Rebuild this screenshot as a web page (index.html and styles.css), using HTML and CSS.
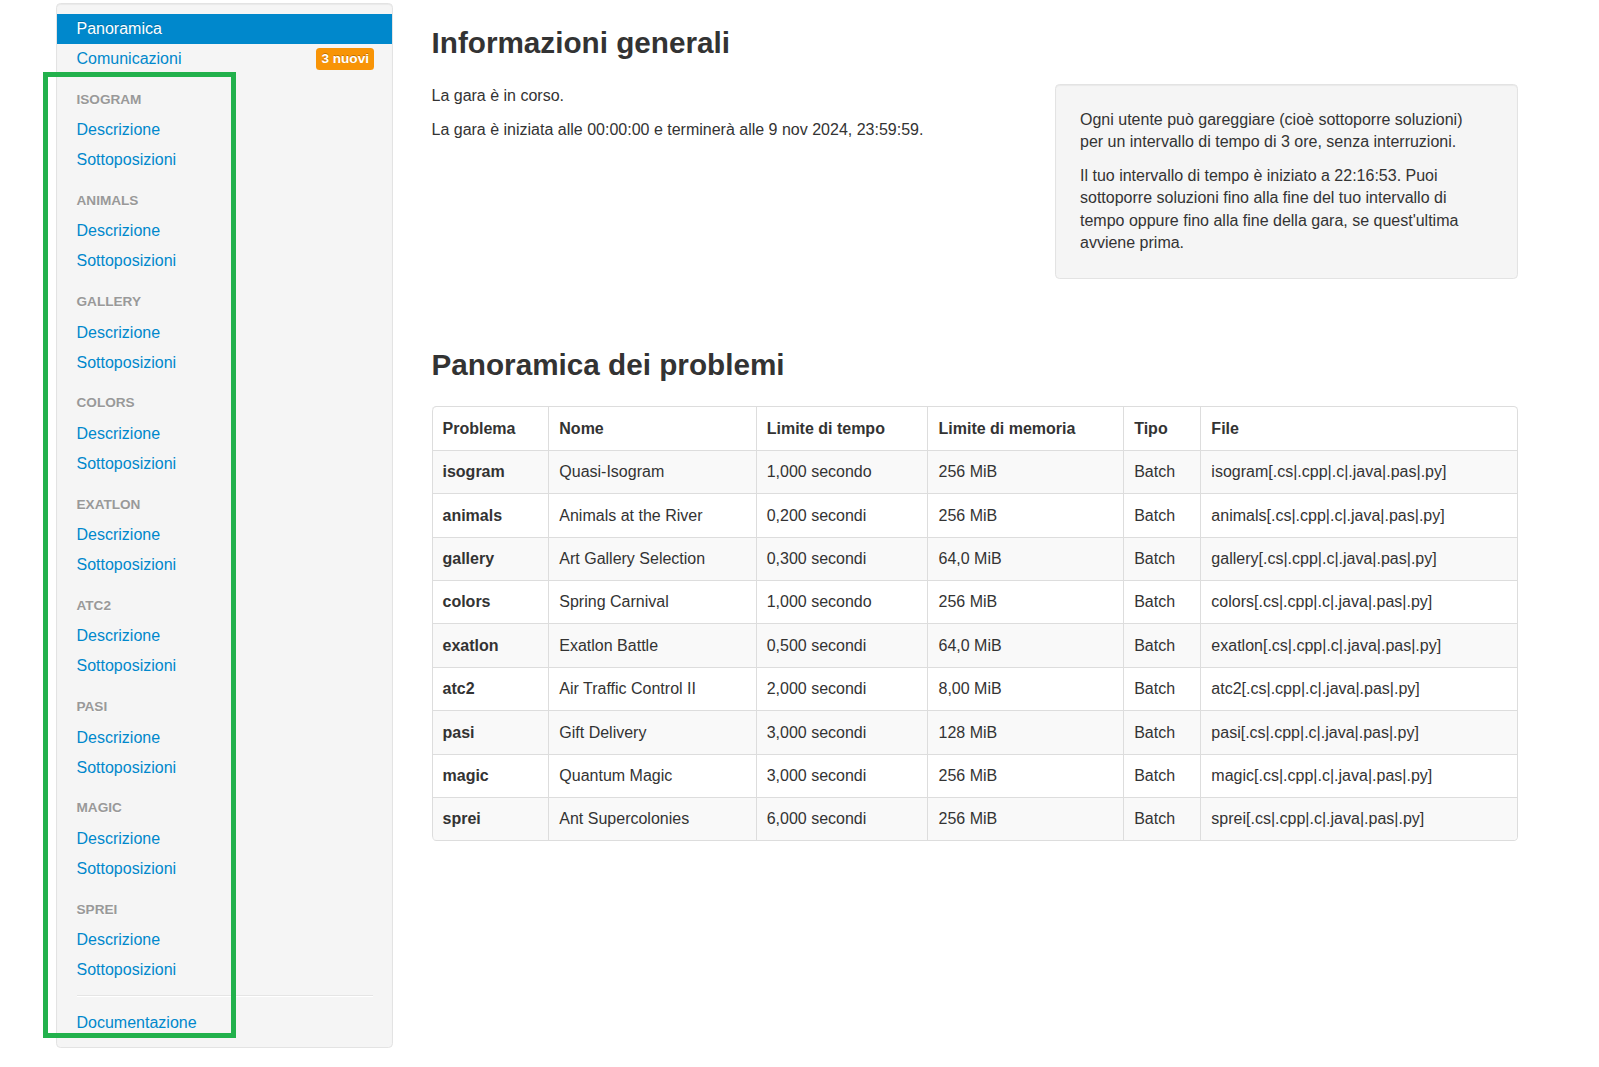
FILE: index.html
```html
<!DOCTYPE html>
<html lang="it">
<head>
<meta charset="utf-8">
<title>Panoramica</title>
<link rel="stylesheet" href="styles.css">
</head>
<body>
<div class="page">
  <div class="well sidebar">
    <ul class="nav-list">
      <li class="active"><a href="#">Panoramica</a></li>
      <li><a href="#" class="with-label">Comunicazioni <span class="label">3 nuovi</span></a></li>
      <li class="nav-header first">isogram</li>
      <li><a href="#">Descrizione</a></li>
      <li><a href="#">Sottoposizioni</a></li>
      <li class="nav-header">animals</li>
      <li><a href="#">Descrizione</a></li>
      <li><a href="#">Sottoposizioni</a></li>
      <li class="nav-header">gallery</li>
      <li><a href="#">Descrizione</a></li>
      <li><a href="#">Sottoposizioni</a></li>
      <li class="nav-header">colors</li>
      <li><a href="#">Descrizione</a></li>
      <li><a href="#">Sottoposizioni</a></li>
      <li class="nav-header">exatlon</li>
      <li><a href="#">Descrizione</a></li>
      <li><a href="#">Sottoposizioni</a></li>
      <li class="nav-header">atc2</li>
      <li><a href="#">Descrizione</a></li>
      <li><a href="#">Sottoposizioni</a></li>
      <li class="nav-header">pasi</li>
      <li><a href="#">Descrizione</a></li>
      <li><a href="#">Sottoposizioni</a></li>
      <li class="nav-header">magic</li>
      <li><a href="#">Descrizione</a></li>
      <li><a href="#">Sottoposizioni</a></li>
      <li class="nav-header">sprei</li>
      <li><a href="#">Descrizione</a></li>
      <li><a href="#">Sottoposizioni</a></li>
      <li class="divider"></li>
      <li><a href="#">Documentazione</a></li>
    </ul>
  </div>

  <div class="main">
    <h1>Informazioni generali</h1>
    <div class="info-row">
      <div class="info-text">
        <p>La gara è in corso.</p>
        <p>La gara è iniziata alle 00:00:00 e terminerà alle 9 nov 2024, 23:59:59.</p>
      </div>
      <div class="well info-box">
        <p>Ogni utente può gareggiare (cioè sottoporre soluzioni) per un intervallo di tempo di 3 ore, senza interruzioni.</p>
        <p>Il tuo intervallo di tempo è iniziato a 22:16:53. Puoi sottoporre soluzioni fino alla fine del tuo intervallo di tempo oppure fino alla fine della gara, se quest'ultima avviene prima.</p>
      </div>
    </div>

    <h1 class="problems-title">Panoramica dei problemi</h1>
    <table class="table">
      <thead>
        <tr>
          <th class="c-prob">Problema</th>
          <th class="c-name">Nome</th>
          <th class="c-time">Limite di tempo</th>
          <th class="c-mem">Limite di memoria</th>
          <th class="c-type">Tipo</th>
          <th>File</th>
        </tr>
      </thead>
      <tbody>
        <tr><th>isogram</th><td>Quasi-Isogram</td><td>1,000 secondo</td><td>256 MiB</td><td>Batch</td><td>isogram[.cs|.cpp|.c|.java|.pas|.py]</td></tr>
        <tr><th>animals</th><td>Animals at the River</td><td>0,200 secondi</td><td>256 MiB</td><td>Batch</td><td>animals[.cs|.cpp|.c|.java|.pas|.py]</td></tr>
        <tr><th>gallery</th><td>Art Gallery Selection</td><td>0,300 secondi</td><td>64,0 MiB</td><td>Batch</td><td>gallery[.cs|.cpp|.c|.java|.pas|.py]</td></tr>
        <tr><th>colors</th><td>Spring Carnival</td><td>1,000 secondo</td><td>256 MiB</td><td>Batch</td><td>colors[.cs|.cpp|.c|.java|.pas|.py]</td></tr>
        <tr><th>exatlon</th><td>Exatlon Battle</td><td>0,500 secondi</td><td>64,0 MiB</td><td>Batch</td><td>exatlon[.cs|.cpp|.c|.java|.pas|.py]</td></tr>
        <tr><th>atc2</th><td>Air Traffic Control II</td><td>2,000 secondi</td><td>8,00 MiB</td><td>Batch</td><td>atc2[.cs|.cpp|.c|.java|.pas|.py]</td></tr>
        <tr><th>pasi</th><td>Gift Delivery</td><td>3,000 secondi</td><td>128 MiB</td><td>Batch</td><td>pasi[.cs|.cpp|.c|.java|.pas|.py]</td></tr>
        <tr><th>magic</th><td>Quantum Magic</td><td>3,000 secondi</td><td>256 MiB</td><td>Batch</td><td>magic[.cs|.cpp|.c|.java|.pas|.py]</td></tr>
        <tr><th>sprei</th><td>Ant Supercolonies</td><td>6,000 secondi</td><td>256 MiB</td><td>Batch</td><td>sprei[.cs|.cpp|.c|.java|.pas|.py]</td></tr>
      </tbody>
    </table>
  </div>

  <div class="highlight"></div>
</div>
</body>
</html>
```

FILE: styles.css
```css
html, body {
  margin: 0;
  padding: 0;
  background: #fff;
}

body {
  font-family: "Liberation Sans", Arial, Helvetica, sans-serif;
  font-size: 16px;
  color: #333;
}

.page {
  position: relative;
  display: flex;
  align-items: flex-start;
  padding-left: 56px;
  min-height: 1067px;
  box-sizing: border-box;
}

/* wells */
.well {
  background: #f5f5f5;
  border: 1px solid #e3e3e3;
  border-radius: 4.5px;
  box-shadow: inset 0 1px 1px rgba(0, 0, 0, 0.05);
  box-sizing: border-box;
}

/* sidebar */
.sidebar {
  width: 337px;
  flex: none;
  margin-top: 3.3px;
  padding: 9.3px 0 9.5px;
}

.nav-list {
  list-style: none;
  margin: 0;
  padding: 0;
}

.nav-list a {
  display: flex;
  align-items: center;
  justify-content: space-between;
  padding: 3.5px 19.5px;
  line-height: 23px;
  color: #0088cc;
  text-decoration: none;
}

.nav-list .with-label {
  padding-right: 18px;
}

.nav-list .active a {
  background: #0088cc;
  color: #fff;
  text-shadow: 0 -1px 0 rgba(0, 0, 0, 0.2);
}

.nav-header {
  margin-top: 10.25px;
  padding: 4px 19.5px;
  line-height: 23px;
  font-size: 13.6px;
  font-weight: bold;
  color: #999;
  text-transform: uppercase;
  text-shadow: 0 1px 0 rgba(255, 255, 255, 0.5);
}

.nav-header.first {
  margin-top: 10px;
}

.divider {
  height: 1px;
  margin: 10.5px 19.5px;
  background: #e5e5e5;
  border-bottom: 1px solid #fff;
}

.label {
  display: inline-block;
  padding: 3px 5px;
  font-size: 13.6px;
  font-weight: bold;
  line-height: 16px;
  color: #fff;
  background: #f89406;
  border-radius: 3.5px;
  text-shadow: 0 -1px 0 rgba(0, 0, 0, 0.25);
  white-space: nowrap;
}

/* main */
.main {
  width: 1086.5px;
  flex: none;
  margin-left: 38.5px;
  padding-top: 23px;
}

h1 {
  margin: 0;
  font-size: 29.7px;
  line-height: 40px;
  font-weight: bold;
  color: #333;
}

.info-row {
  display: flex;
  justify-content: space-between;
  align-items: flex-start;
  margin-top: 21px;
}

.info-text {
  padding-top: 1px;
}

.info-row p {
  margin: 0 0 11px;
  line-height: 22.6px;
}

.info-box {
  width: 463px;
  flex: none;
  padding: 23.5px 34px 23.2px 24px;
}

.info-box p:last-child {
  margin-bottom: 0;
}

.problems-title {
  margin-top: 66px;
}

/* table */
.table {
  width: 100%;
  margin-top: 21.2px;
  table-layout: fixed;
  border: 1px solid #ddd;
  border-left: 0;
  border-collapse: separate;
  border-spacing: 0;
  border-radius: 4.5px;
}

.table th,
.table td {
  box-sizing: border-box;
  padding: 10.4px 10px 9.6px;
  line-height: 22.4px;
  text-align: left;
  vertical-align: top;
  border-left: 1px solid #ddd;
  border-top: 1px solid #ddd;
  font-weight: normal;
}

.table th {
  font-weight: bold;
}

.table thead th {
  border-top: 0;
}

.table tbody tr:nth-child(odd) th,
.table tbody tr:nth-child(odd) td {
  background: #f9f9f9;
}

.table thead th:first-child {
  border-top-left-radius: 4.5px;
}

.table thead th:last-child {
  border-top-right-radius: 4.5px;
}

.table tbody tr:last-child th {
  border-bottom-left-radius: 4.5px;
}

.table tbody tr:last-child td:last-child {
  border-bottom-right-radius: 4.5px;
}

.c-prob { width: 116.8px; }
.c-name { width: 207.4px; }
.c-time { width: 171.8px; }
.c-mem { width: 195.7px; }
.c-type { width: 77.2px; }

/* annotation rectangle drawn over the sidebar */
.highlight {
  position: absolute;
  left: 42.5px;
  top: 72px;
  width: 193.5px;
  height: 966px;
  box-sizing: border-box;
  border: 5px solid #22b14c;
  pointer-events: none;
}
```
